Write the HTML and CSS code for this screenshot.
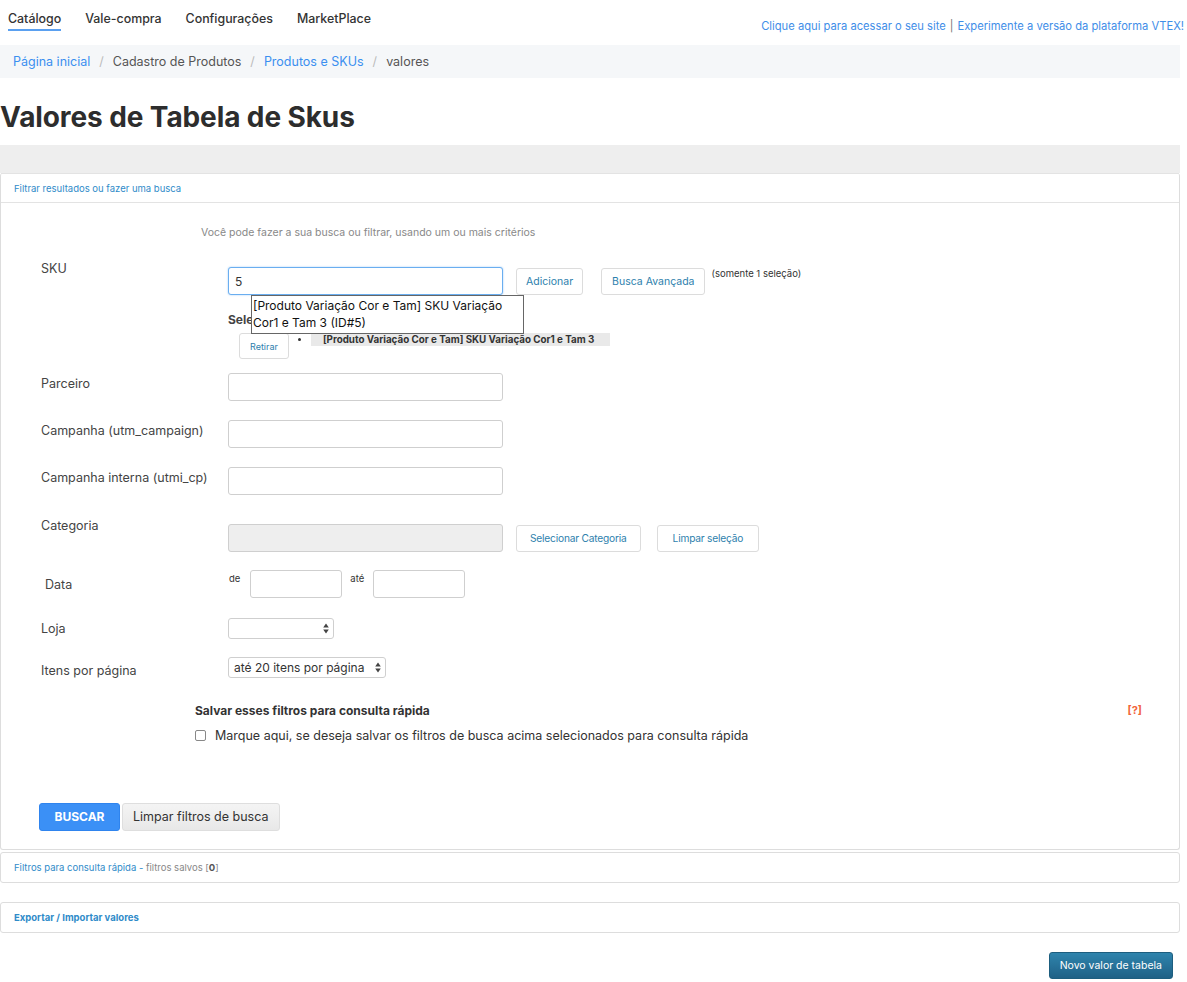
FILE: index.html
```html
<!DOCTYPE html>
<html lang="pt-BR">
<head>
<meta charset="utf-8">
<title>Valores de Tabela de Skus</title>
<link rel="stylesheet" href="styles.css">
</head>
<body>
<div class="page">
  <header class="topbar">
    <nav class="mainnav">
      <a class="navitem active">Catálogo</a>
      <a class="navitem">Vale-compra</a>
      <a class="navitem">Configurações</a>
      <a class="navitem">MarketPlace</a>
    </nav>
    <div class="toplinks">
      <a>Clique aqui para acessar o seu site</a><span class="sep">|</span><a>Experimente a versão da plataforma VTEX!</a>
    </div>
  </header>

  <div class="breadcrumb">
    <a>Página inicial</a><span class="bsep">/</span><span>Cadastro de Produtos</span><span class="bsep">/</span><a>Produtos e SKUs</a><span class="bsep">/</span><span>valores</span>
  </div>

  <h1 class="title">Valores de Tabela de Skus</h1>
  <div class="graybar"></div>

  <section class="panel main-panel">
    <div class="panel-head">Filtrar resultados ou fazer uma busca</div>
    <div class="panel-body">
      <p class="help">Você pode fazer a sua busca ou filtrar, usando um ou mais critérios</p>

      <div class="row sku-row">
        <label class="lbl lbl-top">SKU</label>
        <div class="field">
          <div class="inline">
            <div class="ac-wrap">
              <input class="txt focus" type="text" value="5">
              <div class="ac-menu">[Produto Variação Cor e Tam] SKU Variação Cor1 e Tam 3 (ID#5)</div>
            </div>
            <button class="btn sm">Adicionar</button>
            <button class="btn sm btn-adv">Busca Avançada</button>
            <span class="note">(somente 1 seleção)</span>
          </div>
          <div class="selected-title">Selecionados</div>
          <div class="selected">
            <button class="btn xs">Retirar</button>
            <ul class="sel-list"><li><span class="sel-item">[Produto Variação Cor e Tam] SKU Variação Cor1 e Tam 3</span></li></ul>
          </div>
        </div>
      </div>

      <div class="row"><label class="lbl">Parceiro</label><div class="field"><input class="txt" type="text"></div></div>
      <div class="row"><label class="lbl">Campanha (utm_campaign)</label><div class="field"><input class="txt" type="text"></div></div>
      <div class="row row-last-text"><label class="lbl">Campanha interna (utmi_cp)</label><div class="field"><input class="txt" type="text"></div></div>

      <div class="row cat-row">
        <label class="lbl lbl-top">Categoria</label>
        <div class="field inline">
          <input class="txt disabled" type="text" disabled>
          <button class="btn sm btn-cat">Selecionar Categoria</button>
          <button class="btn sm btn-cat btn-clear">Limpar seleção</button>
        </div>
      </div>

      <div class="row date-row">
        <label class="lbl lbl-date">Data</label>
        <div class="field inline">
          <span class="small s-de">de</span><input class="txt date" type="text">
          <span class="small s-ate">até</span><input class="txt date" type="text">
        </div>
      </div>

      <div class="row sel-row">
        <label class="lbl">Loja</label>
        <div class="field"><div class="select loja"><span></span><svg class="arrows" width="6" height="11" viewBox="0 0 6 11"><path d="M3 0.5 L5.8 4.5 H0.2 Z M3 10.5 L5.8 6.5 H0.2 Z" fill="#444"/></svg></div></div>
      </div>
      <div class="row sel-row">
        <label class="lbl">Itens por página</label>
        <div class="field"><div class="select itens"><span>até 20 itens por página</span><svg class="arrows" width="6" height="11" viewBox="0 0 6 11"><path d="M3 0.5 L5.8 4.5 H0.2 Z M3 10.5 L5.8 6.5 H0.2 Z" fill="#444"/></svg></div></div>
      </div>

      <div class="save">
        <div class="save-head"><strong>Salvar esses filtros para consulta rápida</strong><span class="qmark">[?]</span></div>
        <label class="check"><span class="box"></span>Marque aqui, se deseja salvar os filtros de busca acima selecionados para consulta rápida</label>
      </div>

      <div class="actions">
        <button class="btn-primary">BUSCAR</button>
        <button class="btn-gray">Limpar filtros de busca</button>
      </div>
    </div>
  </section>

  <section class="panel mini"><a class="lnk">Filtros para consulta rápida -</a> <span class="muted">filtros salvos [<b>0</b>]</span></section>
  <section class="panel mini export"><a class="lnk bold">Exportar / Importar valores</a></section>

  <div class="footer-actions"><button class="btn-new">Novo valor de tabela</button></div>
</div>
</body>
</html>
```

FILE: styles.css
```css
* { box-sizing: border-box; }
html, body { margin: 0; padding: 0; background: #fff; }
body { font-family: Inter, "Noto Sans", Arial, sans-serif; color: #333; }
a { cursor: pointer; }
button { font-family: inherit; cursor: pointer; }

.page { width: 1180px; }

.topbar { display: flex; justify-content: space-between; align-items: flex-start; height: 45px; }
.mainnav { display: flex; gap: 24px; padding: 11px 0 0 8px; }
.navitem { font-size: 12.4px; font-weight: 500; color: #333; padding-bottom: 3px; }
.navitem.active { border-bottom: 2px solid #5aa0f0; }
.toplinks { font-size: 11.2px; color: #3f8ee8; padding-top: 19px; margin-right: -4px; }
.toplinks .sep { color: #777; margin: 0 4px; }

.breadcrumb { background: #f5f7f9; height: 33px; display: flex; align-items: center; padding-left: 13px; font-size: 12.5px; color: #555; }
.breadcrumb a { color: #3b8ff0; }
.bsep { color: #bbb; margin: 0 9px; }

.title { font-size: 28px; font-weight: 700; margin: 22px 0 0; height: 45px; line-height: 34px; color: #2d2d2d; letter-spacing: -0.1px; }
.graybar { height: 28px; background: #eeeeee; }

.panel { border: 1px solid #dddddd; border-radius: 3px; background: #fff; }
.main-panel { border-top: none; }
.panel-head { height: 30px; border-bottom: 1px solid #e3e3e3; border-top: 1px solid #e3e3e3; font-size: 9.5px; color: #2f8bc9; padding: 9px 0 0 13px; }
.panel-body { padding: 23px 0 18px 0; }
.help { margin: 0 0 28px 200px; font-size: 10.5px; color: #888; }

.row { display: flex; align-items: flex-start; margin-bottom: 19px; }
.lbl { width: 227px; padding-left: 40px; font-size: 12.5px; color: #444; padding-top: 3px; flex: none; }
.lbl.lbl-top { padding-top: 0; margin-top: -6px; }
.field { flex: 1; }
.inline { display: flex; align-items: center; }

.txt { width: 275px; height: 28px; border: 1px solid #cfcfcf; border-radius: 3px; font-size: 12px; padding: 0 6px; font-family: inherit; background: #fff; }
.txt.focus { border-color: #6aaef0; box-shadow: 0 0 2px #9bc8f5; color: #333; }
.txt.disabled { background: #eeeeee; }
.txt.date { width: 92px; }

.btn { background: #fff; border: 1px solid #dcdcdc; border-radius: 3px; color: #2e7fad; }
.btn.sm { height: 27px; font-size: 10.5px; padding: 0 9px; margin-left: 13px; }
.btn.sm.btn-adv { margin-left: 18px; padding: 0 10px; }
.btn.sm.btn-cat { font-size: 10.2px; letter-spacing: -0.2px; padding: 0 13px; }
.btn.sm.btn-clear { margin-left: 16px; padding: 0 15px; }
.btn.xs { height: 26px; font-size: 9px; padding: 0 10px; }
.note { font-size: 9.5px; color: #333; margin-left: 6px; align-self: flex-start; padding-top: 1px; }

.sku-row { margin-bottom: 14px; }
.ac-wrap { position: relative; }
.ac-menu { position: absolute; left: 23px; top: 28px; width: 273px; height: 39px; border: 1px solid #666; background: #fff; font-size: 12px; line-height: 17px; color: #111; padding: 1px 0 0 1px; z-index: 5; }
.selected-title { font-size: 12px; font-weight: 700; color: #444; margin-top: 17px; height: 17px; }
.selected { display: flex; align-items: flex-start; margin: 4px 0 0 11px; }
.sel-list { margin: 0; padding: 0 0 0 22px; font-size: 9.8px; }
.sel-list li { padding-top: 0; }
.sel-item { display: inline-block; background: #e9e9e9; font-weight: 700; color: #333; padding: 1px 16px 1px 12px; }

.row-last-text { margin-bottom: 29px; }
.cat-row { margin-bottom: 18px; }
.date-row .lbl-date { padding-left: 44px; padding-top: 7px; }
.small { font-size: 9.5px; color: #333; align-self: flex-start; margin-top: 3px; }
.s-de { margin-left: 1px; margin-right: 10px; }
.s-ate { margin-left: 8px; margin-right: 9px; }
.date-row { margin-bottom: 14px; }

.sel-row { margin-bottom: 17px; align-items: center; }
.sel-row .lbl { padding-top: 0; margin-top: 7px; }
.select { display: inline-flex; align-items: center; justify-content: space-between; height: 21px; border: 1px solid #cfcfcf; border-radius: 3px; font-size: 12px; padding: 0 4px 0 5px; color: #333; background: #fff; }
.select.loja { width: 106px; }
.select.itens { width: 158px; }
.arrows { display: block; flex: none; }

.save { margin: 25px 37px 0 194px; }
.save-head { display: flex; justify-content: space-between; font-size: 12px; color: #333; }
.qmark { color: #f2643a; font-weight: 700; font-size: 11px; }
.check { display: flex; align-items: center; margin-top: 10px; font-size: 12.5px; color: #333; }
.box { width: 11px; height: 11px; border: 1px solid #888; border-radius: 2px; margin-right: 9px; }

.actions { display: flex; gap: 2px; margin: 60px 0 0 38px; }
.btn-primary { width: 81px; height: 28px; border: 1px solid #2f84ee; border-radius: 3px; background: #3b90f6; color: #fff; font-weight: 700; font-size: 12px; }
.btn-gray { height: 28px; border: 1px solid #dedede; border-radius: 3px; background: linear-gradient(#f4f4f4, #e8e8e8); color: #333; font-size: 12.5px; padding: 0 10px; }

.mini { margin-top: 2px; height: 31px; padding: 9px 0 0 13px; font-size: 9.5px; }
.mini.export { margin-top: 19px; }
.lnk { color: #2f8bc9; }
.lnk.bold { font-weight: 700; }
.muted { color: #888; }
.muted b { color: #555; }

.footer-actions { display: flex; justify-content: flex-end; padding: 19px 7px 0 0; }
.btn-new { height: 27px; padding: 0 10px; border: 1px solid #1d5e7f; border-radius: 3px; background: linear-gradient(#2f84ad, #1f6186); color: #fff; font-size: 10.5px; }
```
